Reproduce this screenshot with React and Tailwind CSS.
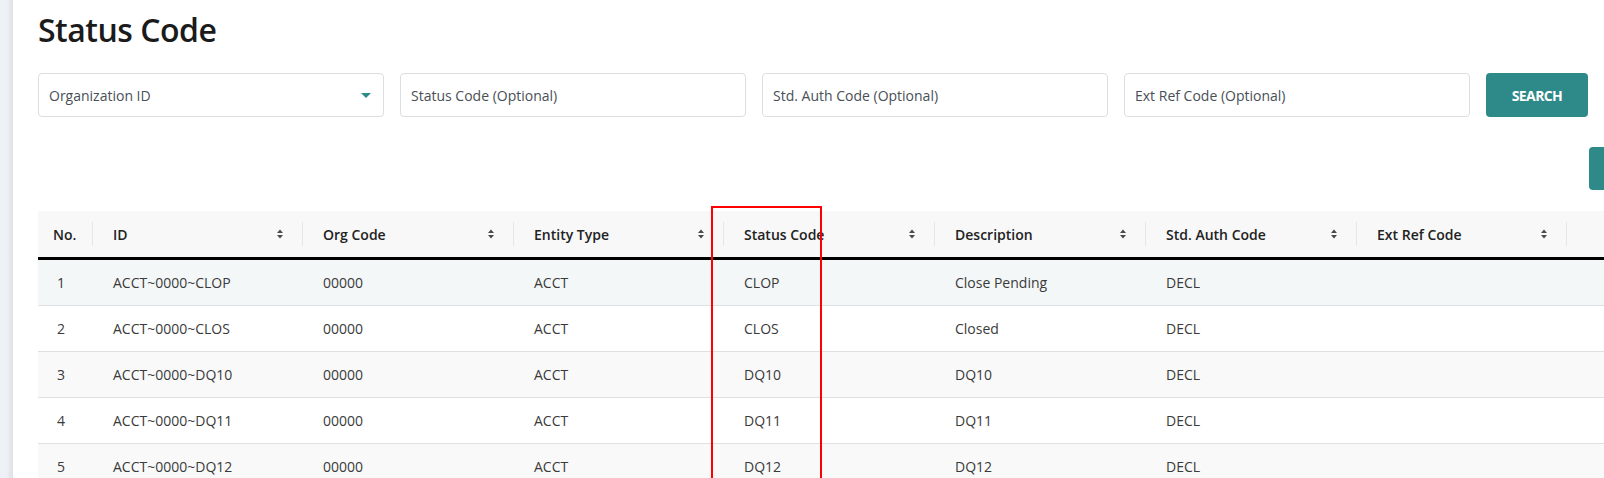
import React from "react";

const cols = "grid grid-cols-[55px_210px_211px_210px_211px_211px_211px_210px_210px]";

function SortIcon() {
  return (
    <svg width="6" height="10" viewBox="0 0 6 10" className="shrink-0">
      <polygon points="3,0.5 6,4 0,4" fill="#4a4a4a" />
      <polygon points="0,6 6,6 3,9.5" fill="#4a4a4a" />
    </svg>
  );
}

function HeadCell({ label, sort = true, first = false }) {
  return (
    <div className={`flex items-center h-full ${first ? "pl-[15px]" : "pl-[20px]"}`}>
      <span className="flex-1 whitespace-nowrap">{label}</span>
      {sort && <SortIcon />}
      <div className={`w-px h-[24px] bg-[#e4e6e8] ${first ? "ml-0" : "ml-[19px]"}`} />
    </div>
  );
}

const rows = [
  ["1", "ACCT~0000~CLOP", "00000", "ACCT", "CLOP", "Close Pending", "DECL", ""],
  ["2", "ACCT~0000~CLOS", "00000", "ACCT", "CLOS", "Closed", "DECL", ""],
  ["3", "ACCT~0000~DQ10", "00000", "ACCT", "DQ10", "DQ10", "DECL", ""],
  ["4", "ACCT~0000~DQ11", "00000", "ACCT", "DQ11", "DQ11", "DECL", ""],
  ["5", "ACCT~0000~DQ12", "00000", "ACCT", "DQ12", "DQ12", "DECL", ""],
];

const rowBg = ["bg-[#f4f7f8]", "bg-white", "bg-[#f9f9f9]", "bg-white", "bg-[#f9f9f9]"];

export default function App() {
  return (
    <div className="relative w-[1604px] h-[478px] overflow-hidden flex bg-white font-['Open_Sans',sans-serif] text-[#333]">
      <div className="w-[13px] shrink-0 h-full bg-gradient-to-r from-[#eef2f6] via-[#edf1f5] to-[#dde1e6]" />
      <div className="flex-1 min-w-0 pl-[25px]">
        <h1 className="pt-[10px] text-[32px] leading-[40px] font-semibold text-[#1b1b1b] tracking-[-0.5px]">
          Status Code
        </h1>

        <div className="mt-[23px] w-[1550px] flex gap-[16px] text-[14px] text-[#484f56]">
          <div className="w-[346px] h-[44px] border border-[#dcdfe2] rounded-[4px] px-[10px] flex items-center justify-between">
            <span>Organization ID</span>
            <svg width="10" height="5" viewBox="0 0 10 5" className="mr-[2px]">
              <polygon points="0,0 10,0 5,5" fill="#2e8a88" />
            </svg>
          </div>
          <div className="w-[346px] h-[44px] border border-[#dcdfe2] rounded-[4px] px-[10px] flex items-center">
            Status Code (Optional)
          </div>
          <div className="w-[346px] h-[44px] border border-[#dcdfe2] rounded-[4px] px-[10px] flex items-center">
            Std. Auth Code (Optional)
          </div>
          <div className="w-[346px] h-[44px] border border-[#dcdfe2] rounded-[4px] px-[10px] flex items-center">
            Ext Ref Code (Optional)
          </div>
          <button className="w-[102px] h-[44px] rounded-[4px] bg-[#2e8a88] text-white text-[14px] font-bold tracking-[-0.6px]">
            SEARCH
          </button>
        </div>

        <div className="mt-[30px] w-[1550px] flex">
          <div className="ml-auto mr-[-101px] w-[100px] h-[43px] rounded-[4px] bg-[#2e8a88]" />
        </div>

        <div className="mt-[21px] w-[1800px] text-[14px]">
          <div className={`${cols} h-[46px] bg-[#f8f8f9] font-semibold text-[#222]`}>
            <HeadCell label="No." sort={false} first />
            <HeadCell label="ID" />
            <HeadCell label="Org Code" />
            <HeadCell label="Entity Type" />
            <HeadCell label="Status Code" />
            <HeadCell label="Description" />
            <HeadCell label="Std. Auth Code" />
            <HeadCell label="Ext Ref Code" />
            <div />
          </div>
          <div className="h-[3px] bg-black" />
          {rows.map((r, i) => (
            <div key={i} className={`${cols} h-[46px] border-b border-[#dee1e4] ${rowBg[i]} text-[#3a3a3a]`}>
              {r.map((c, j) => (
                <div key={j} className={`flex items-center whitespace-nowrap ${j === 0 ? "pl-[19px]" : "pl-[20px]"}`}>
                  {c}
                </div>
              ))}
              <div />
            </div>
          ))}
        </div>
      </div>

      <div className="absolute left-[711px] top-[206px] w-[111px] h-[320px] border-2 border-[#ff0000] pointer-events-none" />
    </div>
  );
}
